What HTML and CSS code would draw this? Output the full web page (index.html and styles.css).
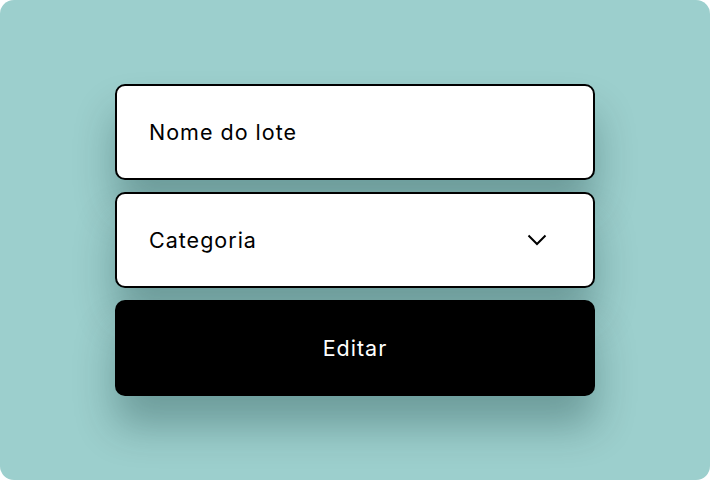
FILE: index.html
```html
<!DOCTYPE html>
<html lang="pt">
<head>
<meta charset="utf-8">
<link rel="stylesheet" href="styles.css">
</head>
<body>
<div class="card">
  <div class="form">
    <div class="field">Nome do lote</div>
    <div class="field select">
      <span>Categoria</span>
      <svg class="chev" width="20" height="12" viewBox="0 0 20 12"><path d="M1.5 1.5 L10 10 L18.5 1.5" fill="none" stroke="#000" stroke-width="2"/></svg>
    </div>
    <div class="button">Editar</div>
  </div>
</div>
</body>
</html>
```
FILE: styles.css
```css
html, body { margin: 0; padding: 0; background: #fff; }
body { width: 710px; height: 480px; font-family: Inter, "Noto Sans", sans-serif; }
.card {
  width: 710px; height: 480px; box-sizing: border-box;
  background: #9ccfcd; border-radius: 14px;
  padding-top: 84px;
  display: flex; justify-content: center;
}
.form {
  width: 480px; height: 312px;
  display: flex; flex-direction: column; gap: 12px;
}
.field, .button {
  height: 96px; box-sizing: border-box; border-radius: 10px;
  box-shadow: 0 30px 40px rgba(0, 40, 40, 0.3);
  font-size: 21.5px; font-weight: 400; letter-spacing: 1px;
}
.field {
  background: #fff; border: 2px solid #000;
  padding: 0 46px 0 32px;
  display: flex; align-items: center;
  color: #000;
}
.select { justify-content: space-between; }
.chev { display: block; }
.button {
  background: #000;
  display: flex; align-items: center; justify-content: center;
  color: #fff;
}
```
